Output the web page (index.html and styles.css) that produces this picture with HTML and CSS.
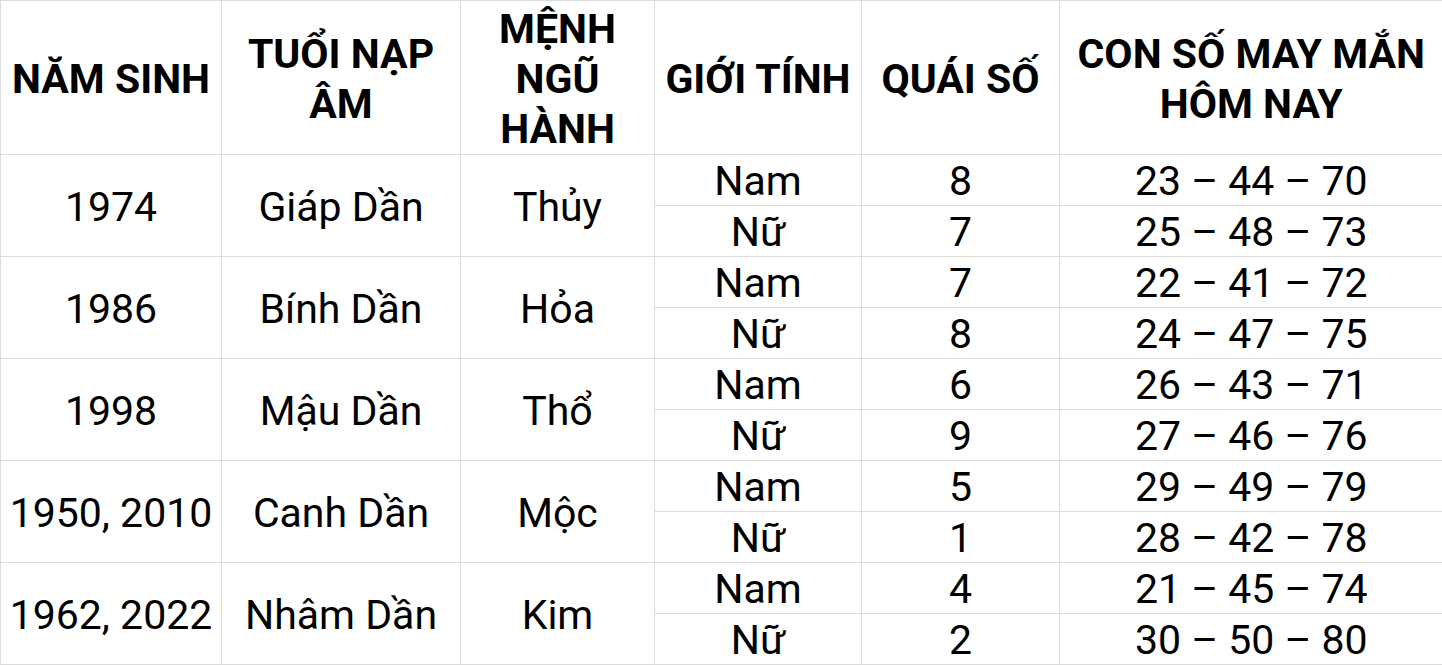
FILE: index.html
```html
<!DOCTYPE html>
<html lang="vi">
<head>
<meta charset="utf-8">
<title>Con số may mắn</title>
<link rel="stylesheet" href="styles.css">
</head>
<body>
<table class="lucky">
  <colgroup>
    <col class="c1"><col class="c2"><col class="c3"><col class="c4"><col class="c5"><col class="c6">
  </colgroup>
  <thead>
    <tr>
      <th>NĂM SINH</th>
      <th>TUỔI NẠP<br>ÂM</th>
      <th>MỆNH<br>NGŨ<br>HÀNH</th>
      <th>GIỚI TÍNH</th>
      <th>QUÁI SỐ</th>
      <th>CON SỐ MAY MẮN<br>HÔM NAY</th>
    </tr>
  </thead>
  <tbody>
    <tr><td rowspan="2">1974</td><td rowspan="2">Giáp Dần</td><td rowspan="2">Thủy</td><td>Nam</td><td>8</td><td>23 – 44 – 70</td></tr>
    <tr><td>Nữ</td><td>7</td><td>25 – 48 – 73</td></tr>
    <tr><td rowspan="2">1986</td><td rowspan="2">Bính Dần</td><td rowspan="2">Hỏa</td><td>Nam</td><td>7</td><td>22 – 41 – 72</td></tr>
    <tr><td>Nữ</td><td>8</td><td>24 – 47 – 75</td></tr>
    <tr><td rowspan="2">1998</td><td rowspan="2">Mậu Dần</td><td rowspan="2">Thổ</td><td>Nam</td><td>6</td><td>26 – 43 – 71</td></tr>
    <tr><td>Nữ</td><td>9</td><td>27 – 46 – 76</td></tr>
    <tr><td rowspan="2">1950, 2010</td><td rowspan="2">Canh Dần</td><td rowspan="2">Mộc</td><td>Nam</td><td>5</td><td>29 – 49 – 79</td></tr>
    <tr><td>Nữ</td><td>1</td><td>28 – 42 – 78</td></tr>
    <tr><td rowspan="2">1962, 2022</td><td rowspan="2">Nhâm Dần</td><td rowspan="2">Kim</td><td>Nam</td><td>4</td><td>21 – 45 – 74</td></tr>
    <tr><td>Nữ</td><td>2</td><td>30 – 50 – 80</td></tr>
  </tbody>
</table>
</body>
</html>
```
FILE: styles.css
```css
html, body {
  margin: 0;
  padding: 0;
  background: #ffffff;
}
body {
  font-family: Roboto, "Liberation Sans", sans-serif;
  color: #000000;
  overflow: hidden;
}
.lucky {
  border-collapse: collapse;
  table-layout: fixed;
  width: 1442px;
  font-size: 41px;
}
.c1 { width: 221px; }
.c2 { width: 239px; }
.c3 { width: 194px; }
.c4 { width: 207px; }
.c5 { width: 198px; }
.c6 { width: 383px; }
.lucky thead tr { height: 154px; }
.lucky tbody tr { height: 51px; }
.lucky th,
.lucky td {
  border: 1px solid #dcdcdc;
  padding: 2px 0 0 0;
  text-align: center;
  vertical-align: middle;
  white-space: nowrap;
}
.lucky th:last-child,
.lucky td:last-child {
  border-right: none;
}
.lucky th {
  font-weight: 700;
  line-height: 50px;
}
.lucky td {
  font-weight: 400;
  line-height: 48px;
}
```
